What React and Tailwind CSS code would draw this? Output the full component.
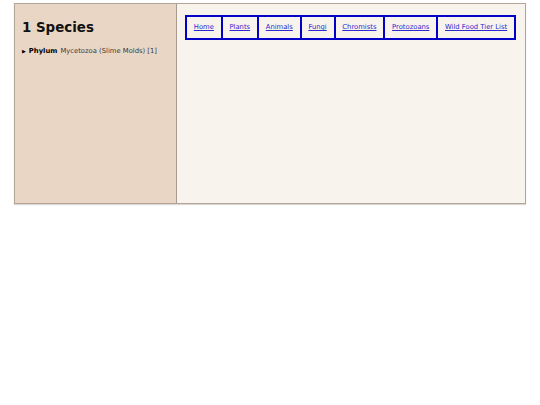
export default function App() {
  const links = ["Home", "Plants", "Animals", "Fungi", "Chromists", "Protozoans", "Wild Food Tier List"];
  return (
    <div className="w-[540px] h-[405px] bg-white pt-[3px] pl-[14px]" style={{ fontFamily: '"DejaVu Sans", Verdana, sans-serif' }}>
      <div className="flex w-[512px] h-[201px] border border-[#b3a498] shadow-[0_1px_1px_rgba(0,0,0,0.15)]">
        <div className="w-[162px] shrink-0 bg-[#ead6c4] border-r border-[#a89a8e] pl-[7px] pt-[16px]">
          <h1 className="text-[13.4px] font-bold leading-[16px] text-[#111]">1 Species</h1>
          <div className="mt-[10px] text-[6.8px] leading-[10px] text-[#3a3a3a] flex items-center whitespace-nowrap">
            <span className="text-[5px] mr-[3px] text-black">▶</span>
            <span className="font-bold text-black mr-[3px]">Phylum</span>
            <span>Mycetozoa (Slime Molds) [1]</span>
          </div>
        </div>
        <div className="flex-1 bg-[#f9f3ee] pt-[8px] pl-[8px]">
          <div className="inline-flex border-2 border-[#0000c8] h-[25px]">
            {links.map((l, i) => (
              <a
                key={l}
                href="#"
                className={`flex items-center whitespace-nowrap px-[6.8px] text-[6.8px] text-[#2a2ad0] underline ${i > 0 ? "border-l-2 border-[#0000c8]" : ""}`}
              >
                {l}
              </a>
            ))}
          </div>
        </div>
      </div>
    </div>
  );
}
